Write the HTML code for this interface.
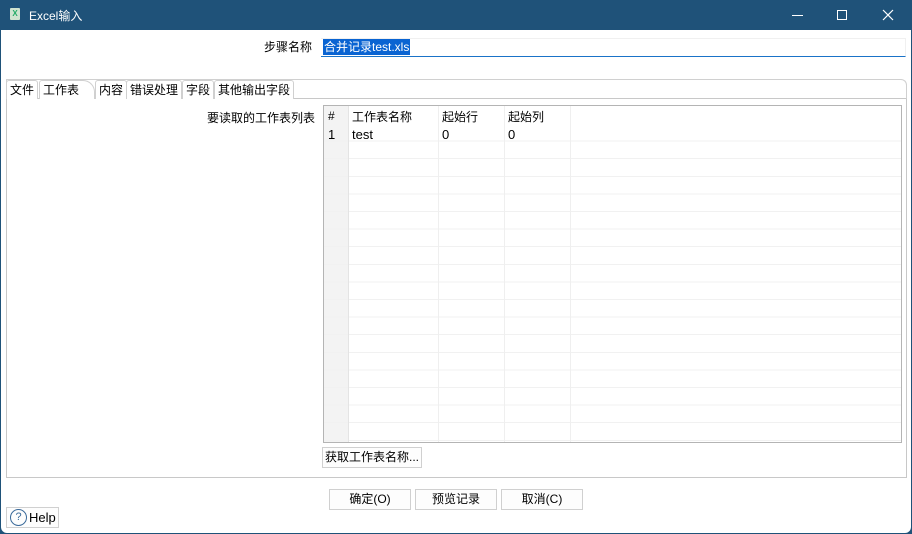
<!DOCTYPE html>
<html><head><meta charset="utf-8"><style>
*{margin:0;padding:0;box-sizing:border-box}
body{width:912px;height:534px;background:#1f5279;font-family:"Liberation Sans","Noto Sans CJK SC",sans-serif;font-size:12px;color:#000;position:relative;overflow:hidden}
.win{position:absolute;left:1px;top:30px;width:910px;height:503px;background:#fff;border-radius:0 0 6px 6px}
.a{position:absolute;white-space:nowrap}
.btn{position:absolute;height:21px;border:1px solid #d0d0d0;background:#fdfdfd;text-align:center;line-height:19px;font-size:12px}
.tab{position:absolute;top:80px;height:19px;border:1px solid #d0d0d0;border-bottom:none;background:#fff;line-height:18px;padding:0 3px;font-size:12px;border-radius:3px 3px 0 0}
</style></head><body>
<div class="a" style="left:10px;top:8px;width:10px;height:12px;background:#cfe3d0;border-radius:1px;font-size:8px;color:#2a6;text-align:center;line-height:12px;font-weight:bold">X</div>
<div class="a" style="left:29px;top:7px;color:#fff;font-size:12px">Excel输入</div>
<div class="a" style="left:792px;top:15px;width:11px;height:1px;background:#fff"></div>
<div class="a" style="left:837px;top:10px;width:10px;height:10px;border:1px solid #fff"></div>
<svg class="a" style="left:882px;top:9px" width="12" height="12"><path d="M1 1L11 11M11 1L1 11" stroke="#fff" stroke-width="1.2"/></svg>
<div class="win"></div>
<div class="a" style="left:264px;top:38px">步骤名称</div>
<div class="a" style="left:321px;top:38px;width:585px;height:19px;border-bottom:1px solid #1a73c8;border-top:1px solid #f0f0f0;border-right:1px solid #f0f0f0"></div>
<div class="a" style="left:323px;top:39px;background:#0a64d2;color:#fff;line-height:16px;padding:0 1px">合并记录test.xls</div>
<div class="a" style="left:6px;top:98px;width:901px;height:380px;border:1px solid #c8c8c8"></div>
<div class="a" style="left:6px;top:79px;width:901px;height:20px;border:1px solid #d0d0d0;border-bottom:1px solid #c8c8c8;border-radius:0 6px 0 0"></div>
<div class="tab" style="left:6px">文件</div>
<div class="tab" style="left:39px;width:56px;border-radius:3px 12px 0 0">工作表</div>
<div class="tab" style="left:95px">内容</div>
<div class="tab" style="left:126px">错误处理</div>
<div class="tab" style="left:182px">字段</div>
<div class="tab" style="left:214px">其他输出字段</div>
<div class="a" style="left:40px;top:98px;width:54px;height:2px;background:#fff"></div>
<div class="a" style="left:207px;top:109px">要读取的工作表列表</div>
<div class="a" style="left:323px;top:105px;width:579px;height:338px;border:1px solid #b4b4b4;background:#fff;overflow:hidden">
 <div class="a" style="left:0;top:0;width:25px;height:338px;background:#f3f3f3"></div>
 <div class="a" style="left:0;top:18px;width:579px;height:320px;background:repeating-linear-gradient(to bottom,transparent 0,transparent 16.6px,#f1f1f1 16.6px,#f1f1f1 17.6px)"></div>
 <div class="a" style="left:24px;top:0;width:1px;height:338px;background:#e4e4e4"></div>
 <div class="a" style="left:114px;top:0;width:1px;height:338px;background:#efefef"></div>
 <div class="a" style="left:180px;top:0;width:1px;height:338px;background:#efefef"></div>
 <div class="a" style="left:246px;top:0;width:1px;height:338px;background:#efefef"></div>
 <div class="a" style="left:4px;top:3px">#</div>
 <div class="a" style="left:28px;top:2px">工作表名称</div>
 <div class="a" style="left:118px;top:2px">起始行</div>
 <div class="a" style="left:184px;top:2px">起始列</div>
 <div class="a" style="left:4px;top:21px;font-size:13px">1</div>
 <div class="a" style="left:28px;top:21px;font-size:13px">test</div>
 <div class="a" style="left:118px;top:21px;font-size:13px">0</div>
 <div class="a" style="left:184px;top:21px;font-size:13px">0</div>
</div>
<div class="btn" style="left:322px;top:447px;width:100px">获取工作表名称...</div>
<div class="btn" style="left:329px;top:489px;width:82px">确定(O)</div>
<div class="btn" style="left:415px;top:489px;width:82px">预览记录</div>
<div class="btn" style="left:501px;top:489px;width:82px">取消(C)</div>
<div class="btn" style="left:6px;top:507px;width:53px;text-align:left;padding-left:22px;font-size:13px">Help</div>
<div class="a" style="left:10px;top:509px;width:17px;height:17px;border:1.5px solid #3a6a9a;border-radius:50%;text-align:center;line-height:14px;font-size:11px;color:#3a6a9a">?</div>
</body></html>
